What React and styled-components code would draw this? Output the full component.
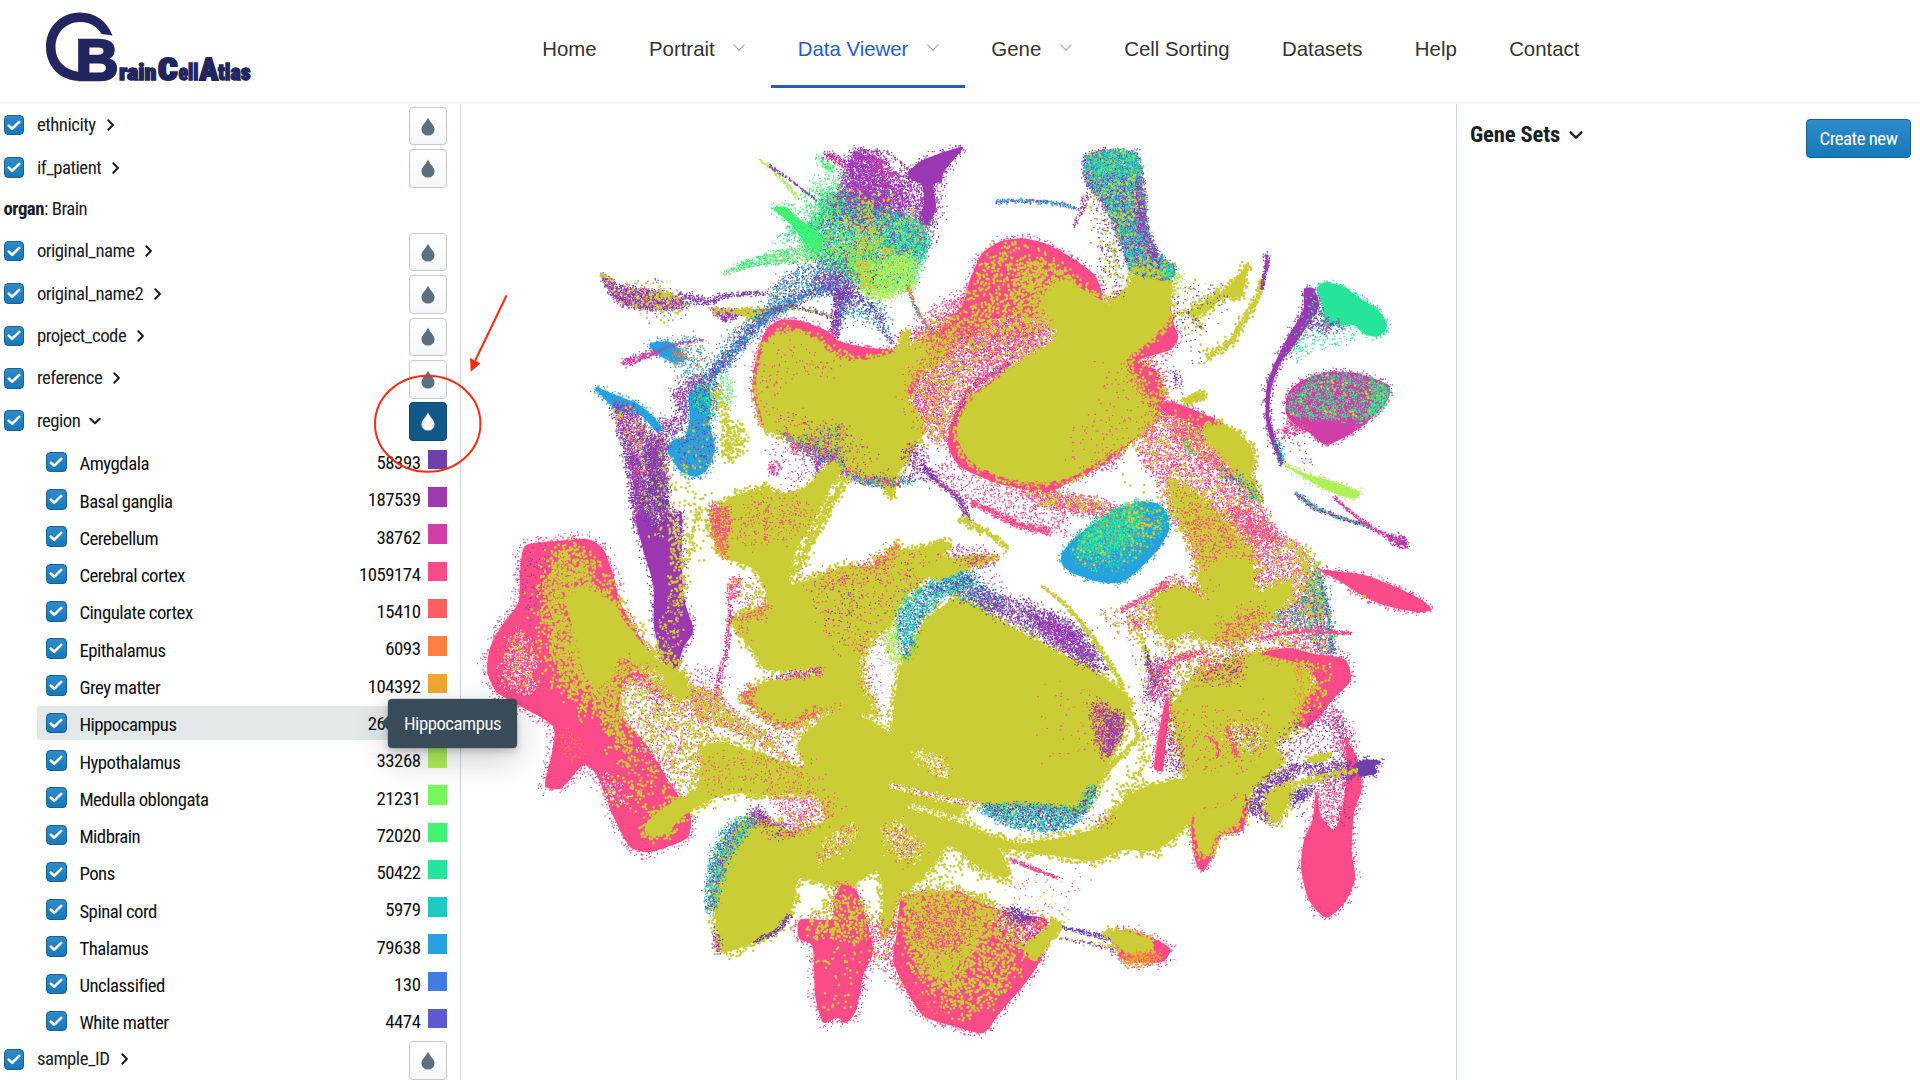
import React from "react";
import styled, { createGlobalStyle } from "styled-components";

const GlobalStyle = createGlobalStyle`
  *, *::before, *::after { box-sizing: border-box; }
  html, body { margin: 0; background: #fff; overflow: hidden; }
`;

const condensed = `"Roboto Condensed", Roboto, "Liberation Sans", sans-serif`;

/* ---------- layout ---------- */

const Page = styled.div`
  position: relative;
  width: 1920px;
  height: 1080px;
  display: flex;
  flex-direction: column;
  overflow: hidden;
  background: #fff;
  color: #182026;
  font-family: ${condensed};
`;

const Header = styled.header`
  flex: none;
  height: 104px;
  display: flex;
  align-items: flex-start;
  border-bottom: 3px solid #f4f9fc;
`;

const LogoBox = styled.a`
  display: block;
  width: 516px;
  height: 100px;
`;

const Nav = styled.nav`
  display: flex;
  height: 88px;
`;

const NavItem = styled.a`
  display: flex;
  align-items: center;
  gap: 18.6px;
  padding: 12px 26.2px 0;
  border-bottom: 3px solid ${(p) => (p.$active ? "#1f5fc6" : "transparent")};
  color: ${(p) => (p.$active ? "#1f5fc6" : "#333")};
  font: 20.4px/24px "Liberation Sans", Arial, sans-serif;
  white-space: nowrap;
`;

const Body = styled.main`
  flex: 1;
  min-height: 0;
  display: flex;
`;

const Sidebar = styled.aside`
  width: 461px;
  flex: none;
  border-right: 1px solid #c9d6dc;
`;

const Canvas = styled.section`
  width: 996px;
  flex: none;
  border-right: 1px solid #c9d6dc;
`;

const GenePanel = styled.aside`
  flex: 1;
  display: flex;
  justify-content: space-between;
  align-items: flex-start;
  padding: 15px 9px 0 13px;
`;

/* ---------- sidebar ---------- */

const CategoryRow = styled.div`
  height: ${(p) => p.$height || 42.4}px;
  display: flex;
  align-items: center;
  padding: 0 13px 0 3.5px;
`;

const Box = styled.span`
  flex: none;
  width: 20.6px;
  height: 20.6px;
  display: flex;
  align-items: center;
  justify-content: center;
  border: 1.2px solid #1c5f94;
  border-radius: 4px;
  background: linear-gradient(#2f8bca, #1779ba);
`;

const Squeeze = styled.span`
  display: inline-block;
  font-size: ${(p) => p.$size || 18.8}px;
  line-height: 24px;
  font-weight: ${(p) => p.$weight || 400};
  letter-spacing: ${(p) => p.$track || -0.5}px;
  white-space: nowrap;
  font-stretch: 75%;
`;

const CategoryName = styled.div`
  flex: 1;
  display: flex;
  align-items: center;
  gap: 9px;
  margin-left: 12.8px;
`;

const DropButton = styled.span`
  flex: none;
  width: 38.5px;
  height: 38.5px;
  margin-top: 2px;
  display: flex;
  align-items: center;
  justify-content: center;
  border: 1.3px solid ${(p) => (p.$active ? "#0b4873" : "#c6cacd")};
  border-radius: 4px;
  color: ${(p) => (p.$active ? "#fff" : "#5c7080")};
  background: ${(p) => (p.$active ? "#125888" : "linear-gradient(#ffffff, #f4f7f9)")};
`;

const ValueList = styled.div`
  display: flex;
  flex-direction: column;
  gap: 2.97px;
  padding: 3.1px 13px 0 37px;
`;

const ValueRow = styled.div`
  height: 34.3px;
  display: flex;
  align-items: center;
  padding-left: 9.2px;
  border-radius: 3px 0 0 3px;
  color: #0c0f12;
  background: ${(p) => (p.$hover ? "#e3e8eb" : "transparent")};
`;

const ValueName = styled(Squeeze)`
  flex: 1;
  margin: 4.5px 0 0 12.6px;
`;

const Count = styled(Squeeze)`
  margin-top: 2px;
`;

const Swatch = styled.i`
  width: 19.2px;
  height: 19.5px;
  margin: -5px 0 0 7.4px;
  background: ${(p) => p.$color};
`;

const Tooltip = styled.div`
  position: absolute;
  left: 388px;
  top: 699px;
  width: 129px;
  height: 49px;
  display: flex;
  align-items: center;
  justify-content: center;
  border-radius: 4px;
  background: #394b59;
  color: #f5f8fa;
  box-shadow: 0 0 0 1px rgba(16, 22, 26, 0.1), 0 3px 6px rgba(16, 22, 26, 0.2), 0 11px 32px rgba(16, 22, 26, 0.22);
  &::before {
    content: "";
    position: absolute;
    left: -7px;
    top: 16px;
    border: solid transparent;
    border-width: 8px 8px 8px 0;
    border-right-color: #394b59;
  }
`;

const Annotation = styled.svg`
  position: absolute;
  left: 360px;
  top: 280px;
`;

/* ---------- gene panel ---------- */

const PanelTitle = styled.div`
  display: flex;
  align-items: center;
  gap: 9px;
  padding-top: 4px;
`;

const CreateButton = styled.button`
  width: 105px;
  height: 38.5px;
  display: flex;
  align-items: center;
  justify-content: center;
  border: 1.3px solid #1a5f93;
  border-radius: 4px;
  color: #fff;
  background: linear-gradient(#2f8bca, #1779ba);
  font-family: inherit;
  padding: 2px 0 0;
`;

/* ---------- icons ---------- */

const Tick = () => (
  <svg width="14" height="11" viewBox="0 0 14 11">
    <path d="M1.8 5.6 5.2 8.8 12.2 1.9" fill="none" stroke="#fff" strokeWidth="2.6" strokeLinecap="round" strokeLinejoin="round" />
  </svg>
);

const Drop = () => (
  <svg width="14" height="19" viewBox="0 0 14 19">
    <path d="M7 .5C6 4 .4 8.400.4 12.200A6.500 6.300 0 0 0 13.600 12.200C13.600 8.400 8 4 7 .5Z" fill="currentColor" />
  </svg>
);

const Chevron = ({ open, size = 12 }) => (
  <svg width={size} height={size} viewBox="0 0 12 12">
    <path d={open ? "M1.300 3.700 6 8.300 10.700 3.700" : "M3.300 1.300 7.900 6 3.300 10.700"} fill="none" stroke="#182026" strokeWidth="2" strokeLinecap="round" strokeLinejoin="round" />
  </svg>
);

const ThinChevron = () => (
  <svg width="12" height="10" viewBox="0 0 12 10">
    <path d="M.6 .6 6 6.200 11.400 .6" fill="none" stroke="#a6a9ad" strokeWidth="1.100" />
  </svg>
);

const Logo = () => (
  <svg width="516" height="100" viewBox="0 0 516 100" fill="#232560" stroke="#232560">
    <path
      d="M112.500 35.500 C107 21 95 12.500 80 12.500 C60 12.500 46 28 46 47 C46 66 60 81 80 81 L80 72 C65 70 55.500 61 55.500 47 C55.500 33 66 22 80 22 C91 22 97.500 27 101.500 34 Z"
      stroke="none"
    />
    <text x="75.500" y="80" fontFamily="Liberation Sans, Arial, sans-serif" fontWeight="700" fontSize="58" strokeWidth="2.600" textLength="43" lengthAdjust="spacingAndGlyphs">B</text>
    <g fontFamily={condensed} fontWeight="900" strokeWidth="1.3">
      <text x="119" y="79.500" fontSize="22" textLength="37.500" lengthAdjust="spacingAndGlyphs">rain</text>
      <text x="158" y="79.500" fontSize="32" strokeWidth="2.200" textLength="19.500" lengthAdjust="spacingAndGlyphs">C</text>
      <text x="178.500" y="79.500" fontSize="22" textLength="20" lengthAdjust="spacingAndGlyphs">ell</text>
      <text x="199.500" y="79.500" fontSize="32" strokeWidth="2" textLength="18.500" lengthAdjust="spacingAndGlyphs">A</text>
      <text x="218" y="79.500" fontSize="22" textLength="32.500" lengthAdjust="spacingAndGlyphs">tlas</text>
    </g>
  </svg>
);

/* ---------- embedding plot ---------- */

const K = {
  D: "#6e40aa", V: "#9c39b2", M: "#d23ea7", P: "#fb4b88", R: "#ff5e63", O: "#ff8040", G: "#efa72f",
  Y: "#cbcd36", L: "#aff05b", N: "#76f85c", g: "#40f373", T: "#26e59a", C: "#1ec8c4", B: "#26a2de",
  U: "#417de0", W: "#ffffff",
};

/* Cell clusters are stored in four tiles: three units to a pixel across,
   and slightly fewer per pixel down in the two lower tiles. */
const TILE = { a: [480, 130], b: [940, 130], c: [480, 520], d: [940, 520] };
const LOW = 2.904;

const toY = (tile, y) => {
  if (tile === "c" || tile === "d") return 520 + y / (y > 0 ? LOW : 3);
  return y > 1170 ? 520 + (y - 1170) / LOW : 130 + y / 3;
};

let seed = 20231;
const rnd = () => {
  seed = (seed * 1664525 + 1013904223) >>> 0;
  return seed / 4294967296;
};
const gauss = () => rnd() + rnd() + rnd() - 1.5;

const parse = (tile, text) => {
  const n = text.trim().split(/\s+/).map(Number);
  const out = [];
  for (let i = 0; i + 1 < n.length; i += 2) out.push([TILE[tile][0] + n[i] / 3, toY(tile, n[i + 1])]);
  return out;
};

const curve = (p, closed) => {
  const out = [];
  const n = p.length;
  const at = (i) => (closed ? p[(i + n) % n] : p[Math.max(0, Math.min(n - 1, i))]);
  for (let i = 0; i < (closed ? n : n - 1); i++) {
    const [a, b, c, d] = [at(i - 1), at(i), at(i + 1), at(i + 2)];
    for (let k = 0; k < 5; k++) {
      const t = k / 5;
      const f = (j) => {
        const m1 = (c[j] - a[j]) * 0.35;
        const m2 = (d[j] - b[j]) * 0.35;
        return (2 * t ** 3 - 3 * t * t + 1) * b[j] + (t ** 3 - 2 * t * t + t) * m1 + (3 * t * t - 2 * t ** 3) * c[j] + (t ** 3 - t * t) * m2;
      };
      out.push([f(0), f(1)]);
    }
  }
  if (!closed) out.push(p[n - 1]);
  return out;
};

const inside = (x, y, p) => {
  let r = false;
  for (let i = 0, j = p.length - 1; i < p.length; j = i++) {
    if (p[i][1] > y !== p[j][1] > y && x < ((p[j][0] - p[i][0]) * (y - p[i][1])) / (p[j][1] - p[i][1]) + p[i][0]) r = !r;
  }
  return r;
};

const layers = [];
const dot = (x, y) => `M${x.toFixed(1)} ${y.toFixed(1)}h0`;
const sizeOf = (c) => (c === "Y" ? 2.6 : 1.5);

/* solid cluster with a ragged rim */
const F = (tile, c, text, fuzz = 1.6) => {
  const p = curve(parse(tile, text), true);
  layers.push({ color: K[c], fill: "M" + p.map((q) => q[0].toFixed(1) + " " + q[1].toFixed(1)).join("L") + "Z" });
  let d = "";
  for (let i = 0; i < p.length; i++) {
    const q = p[(i + 1) % p.length];
    const len = Math.hypot(q[0] - p[i][0], q[1] - p[i][1]);
    for (let k = 0; k < len * (0.6 + fuzz * 0.25); k++) {
      const t = rnd();
      d += dot(p[i][0] + (q[0] - p[i][0]) * t + gauss() * fuzz * 2, p[i][1] + (q[1] - p[i][1]) * t + gauss() * fuzz * 2);
    }
  }
  layers.push({ color: K[c], dots: d, size: sizeOf(c) });
};

/* scattered cells inside an outline; mix = "V.5 T.2" */
const S = (tile, mix, text, jitter = 3) => {
  const p = curve(parse(tile, text), true);
  const xs = p.map((q) => q[0]);
  const ys = p.map((q) => q[1]);
  const [x0, x1, y0, y1] = [Math.min(...xs), Math.max(...xs), Math.min(...ys), Math.max(...ys)];
  mix.split(" ").forEach((m) => {
    const c = m[0];
    const s = sizeOf(c);
    const tries = ((x1 - x0) * (y1 - y0) * Number(m.slice(1)) * 1.3) / (s * s * 0.8);
    let d = "";
    for (let i = 0; i < tries; i++) {
      const x = x0 + rnd() * (x1 - x0);
      const y = y0 + rnd() * (y1 - y0);
      if (inside(x, y, p)) d += dot(x + gauss() * jitter, y + gauss() * jitter);
    }
    layers.push({ color: K[c], dots: d, size: s });
  });
};

/* thin trail of cells, w0 to w1 px wide */
const L = (tile, mix, text, w0, w1) => {
  const p = curve(parse(tile, text), false);
  mix.split(" ").forEach((m) => {
    const c = m[0];
    const s = sizeOf(c);
    let d = "";
    for (let i = 0; i < p.length - 1; i++) {
      const len = Math.hypot(p[i + 1][0] - p[i][0], p[i + 1][1] - p[i][1]);
      const w = w0 + ((w1 - w0) * i) / p.length;
      const n = (len * w * Number(m.slice(1))) / (s * s * 0.5);
      for (let k = 0; k < n || (k === 0 && rnd() < n); k++) {
        const t = rnd();
        d += dot(p[i][0] + (p[i + 1][0] - p[i][0]) * t + gauss() * w * 0.6, p[i][1] + (p[i + 1][1] - p[i][1]) * t + gauss() * w * 0.6);
      }
    }
    layers.push({ color: K[c], dots: d, size: s });
  });
};

/* upper left fan */
S("a", "V.9", "1110 90 1130 60 1190 80 1220 150 1230 240 1150 250 1090 200 1095 140", 4);
S("a", "V.7 M.08", "1095 90 1130 60 1200 75 1250 130 1280 200 1260 270 1180 270 1080 240 1080 160", 6);
S("a", "V.4", "1240 140 1300 120 1340 200 1340 300 1270 260", 7);
F("a", "V", "1285 128 1320 95 1380 70 1450 50 1420 90 1390 128 1385 155 1360 165 1368 230 1345 285 1315 275 1332 220 1325 165 1295 150", 2.5);
S("a", "V.2", "1260 140 1350 140 1390 200 1370 320 1320 330", 7);
S("a", "M.7", "1165 85 1210 95 1235 140 1190 120", 3);
S("a", "g.9 T.35 C.15 V.14", "1030 190 1100 200 1250 260 1320 280 1345 340 1310 420 1290 470 1200 480 1120 440 1060 410 1000 370 960 300 1010 260", 6);
S("a", "g.35", "960 200 1080 120 1080 240 1000 290", 8);
S("a", "V.4 B.08", "1070 190 1250 190 1270 270 1160 300 1060 270", 9);
S("a", "T.4 V.12 B.12", "1190 250 1330 270 1340 350 1310 390 1200 340", 7);
F("a", "g", "880 235 920 232 950 262 1020 315 1020 360 980 345 940 290", 3);
S("a", "g.5 T.25 L.15", "720 435 780 398 870 368 990 345 1020 380 950 400 850 405 760 425", 2.5);
S("a", "T.25 g.2", "885 330 960 280 1010 330 900 335", 4);
S("a", "L1.3", "1110 410 1180 395 1300 372 1300 470 1200 508 1150 490", 5);
S("a", "L.35 g.2 D.06 V.05", "1010 370 1160 330 1200 440 1140 480 1040 420", 8);
S("a", "Y.45", "1130 225 1160 225 1215 340 1235 380 1160 360 1185 480 1150 480 1120 400 1140 320", 5);
S("a", "Y.1", "1060 180 1250 200 1330 320 1200 470 1060 400", 5);
L("a", "L.8", "840 90 880 120 920 165 950 200", 3, 5);
L("a", "V.7", "865 105 930 150 1010 212", 3, 2);
L("a", "g.7", "1015 85 1040 105 1055 120", 6, 9);
L("a", "P.5 V.4", "1035 75 1060 80 1085 105", 8, 8);
L("a", "V.3", "1150 65 1230 70 1290 125", 4, 5);

/* left arms */
S("a", "V.8 D.45 P.18 Y.14", "362 435 385 440 410 465 480 475 560 490 605 505 620 530 520 540 430 525 390 490", 3);
S("a", "Y.6", "362 432 380 432 395 462 378 460", 2);
L("a", "Y.6", "510 500 560 490 600 505", 7, 6);
S("a", "L.06 V.05 Y.04", "430 455 580 465 620 570 480 560", 6);
L("a", "D.45 V.2", "600 498 680 515 740 497 860 490", 9, 3);
S("a", "V1", "690 535 760 545 790 550 740 575 705 555", 2);
L("a", "V.8 Y.6", "700 543 760 545 850 545 930 530", 6, 5);
F("a", "Y", "790 545 845 545 835 568 805 562", 2);
L("a", "Y.3 D.3", "930 530 1000 540 1050 560", 5, 5);
F("a", "B", "510 640 565 634 600 660 615 690 580 698 545 680 515 658", 2.5);
S("a", "B.2 O.12", "560 640 660 630 680 760 620 750 580 690", 9);
S("a", "O.4", "580 665 625 665 610 690", 3);
L("a", "M1", "430 700 480 683 530 665", 8, 5);
L("a", "M.6 U.3", "530 665 580 645 670 628", 4, 2);
S("a", "D.26 B.17 C.12 O.04", "900 450 1040 385 1140 440 1080 480 980 500 890 560 820 620 740 710 690 760 630 760 700 690 760 610 840 540", 7);
L("a", "D.4 B.22", "1060 470 960 500 860 560 780 640 690 745", 9, 11);
S("a", "D.6 V.25 B.1", "1000 450 1080 435 1130 500 1100 540 1060 490", 7);
S("a", "V.6 D.6", "1065 480 1095 490 1075 615 1048 620 1058 540", 3);
S("a", "B.18 C.1 D.1", "1080 520 1200 520 1230 620 1150 560 1080 600", 8);
L("a", "D.25", "1110 480 1180 540 1240 650", 12, 5);
L("a", "O.8 B.2", "1282 465 1310 540 1358 618", 4, 3);

/* left blue bulb and violet leg */
S("a", "D.4 V.2 P.08", "580 780 610 755 690 745 670 800 620 880 560 920 530 880 590 850", 6);
F("a", "B", "628 790 690 780 688 880 705 955 680 1020 645 1040 600 1022 562 960 580 930 615 920 630 860", 2.5);
S("a", "C.3 g.2 D.2", "640 770 715 760 695 880 640 820", 5);
F("a", "B", "345 770 400 792 470 820 520 860 545 895 530 905 480 855 410 838 370 803", 2);
S("a", "O.05 Y.04 D.08", "600 880 700 880 690 1020 600 1000", 3);
S("a", "g.25 L.1", "725 730 750 740 760 830 720 800", 4);
S("a", "V.6 D.35 L.08 Y.09 P.12", "400 830 460 835 500 900 560 930 560 1030 570 1130 600 1180 480 1180 455 1010 420 920", 5);
S("a", "V.8 D.3 P.12", "435 970 470 980 490 1100 520 1190 468 1190 450 1060", 5);
S("a", "D.7 V.3", "500 930 545 930 545 1030 565 1150 530 1140 500 1000", 5);
F("a", "V", "468 1160 490 1150 530 1190 570 1150 605 1150 605 1290 612 1400 640 1490 610 1540 588 1605 550 1580 522 1480 520 1360 490 1260 472 1190", 2.5);
S("a", "W.4", "568 1110 595 1110 600 1215 578 1215", 4);
S("a", "Y.1 D.3", "480 1090 560 1000 560 1220 510 1200", 5);
S("a", "Y.42", "575 1150 620 1300 600 1500 580 1600 530 1560 540 1480 570 1380", 5);
S("a", "V.3", "520 1320 570 1350 610 1480 590 1560 540 1530", 3);
S("c", "V.7 D.4", "525 460 545 475 552 530 545 565 530 560 532 500", 4);
S("a", "Y1", "700 765 725 800 755 860 790 895 798 920 775 980 740 990 722 960 728 880 705 810", 5);
S("a", "Y.09", "560 960 640 1020 690 1150 640 1300 600 1150 550 1080", 12);
L("a", "Y.5", "665 1130 640 1200 625 1290", 6, 6);

/* upper centre lobes */
S("b", "P.5 D.03", "-120 640 80 480 200 580 340 600 200 720 80 790 40 850 20 950 -60 880 -120 800", 10);
F("a", "P", "818 750 835 660 858 600 900 570 960 572 1040 602 1080 635 1180 655 1280 655 1360 620 1440 560 1340 690 1290 800 1200 900 900 900 850 890 828 830", 2);
F("a", "Y", "842 700 850 645 900 615 960 608 1020 640 1070 688 1160 690 1260 662 1370 625 1440 585 1410 640 1380 690 1310 730 1275 800 1330 880 1305 950 1255 1030 1235 1102 1215 1068 1160 1050 1080 1010 1000 960 930 925 860 900 838 830 828 750", 2.5);
S("a", "Y.3", "850 650 900 590 960 600 1060 650 1150 680 1060 700 900 680", 4);
F("a", "Y", "1255 660 1275 608 1288 610 1275 665");
S("a", "P.05", "830 700 900 640 1100 720 900 760 860 880", 10);
S("a", "P.06 V.03", "850 860 1080 880 1220 1040 1060 1000 950 930", 9);
S("a", "Y.28", "1280 740 1440 600 1500 560 1500 640 1400 900 1330 930", 10);
S("a", "P.2", "1280 740 1400 650 1400 800 1330 900", 10);
S("a", "D.5 C.25 P.2", "900 905 980 940 1070 970 1100 1020 1200 1045 1300 1045 1290 1060 1200 1068 1110 1050 1010 1000", 4);
S("a", "D.12 C.1 P.1", "960 920 1080 880 1100 960 1050 980", 9);
S("a", "V.55", "1280 960 1330 950 1340 1000 1390 1050 1350 1050 1280 1010", 8);
L("a", "V.5 D.4", "1330 1010 1380 1060 1440 1110 1465 1170", 5, 6);
S("a", "P.8 V.3", "870 1010 890 995 890 1030 875 1040", 4);
S("a", "P.06 D.03", "870 940 1010 970 1020 1080 940 1100", 8);
L("a", "V.7", "1020 990 1010 1060 1020 1090", 6, 5);
S("a", "P.7", "930 940 960 950 950 975 940 970", 3);
F("b", "P", "20 590 70 520 90 450 125 372 180 335 240 325 300 335 360 362 420 400 468 440 488 512 440 560 330 560 230 560 150 570 70 610", 2.5);
S("b", "P.7 Y.15", "-30 640 40 570 160 560 340 560 260 620 120 610 40 660", 7);
S("b", "P.35 Y.12 D.02", "60 600 200 560 340 560 330 660 230 690 120 700", 9);
S("b", "Y.3", "60 560 110 420 180 350 280 350 400 440 450 520 330 600 100 600", 5);
S("b", "Y.6", "210 460 290 390 370 430 440 500 440 580 250 560", 9);
S("b", "Y.5 P.2", "-60 640 -20 580 60 560 60 620 -20 700", 8);
F("b", "P", "50 850 100 790 210 715 340 640 400 600 500 520 560 480 640 470 690 530 702 585 715 622 690 660 600 690 650 725 672 800 660 840 620 892 560 950 480 1010 400 1050 330 1085 260 1080 160 1055 60 1010 25 950 30 890", 2.8);
F("b", "Y", "68 850 110 795 230 705 345 630 340 570 300 520 370 450 430 480 500 515 560 480 590 425 640 408 695 450 690 530 685 570 620 640 560 690 590 760 645 825 650 860 575 930 480 990 400 1038 300 1058 200 1045 100 1000 65 955 50 900", 3.2);
S("b", "P.04", "480 700 660 800 640 870 400 1040 420 900 500 850", 14);
S("b", "P.35 Y.25", "560 690 650 700 690 820 650 870 600 800", 6);
L("b", "D.3 P.4", "210 700 140 740 80 790 40 880", 6, 6);
S("b", "P.4", "440 1030 540 960 540 1000 480 1020", 5);

/* stalk */
S("b", "V1.3 D.3 B.35 T.4 Y.12", "440 75 500 60 580 67 600 110 615 200 622 290 655 370 700 410 690 445 580 430 550 360 520 280 490 220 440 160 432 120", 3);
S("b", "T.3 g.15 B.15", "450 75 580 67 600 140 500 130 470 150", 4);
S("b", "V.6", "595 130 612 200 620 290 655 370 630 380 590 280", 3);
S("b", "Y.6", "560 440 590 400 640 405 690 440 640 470", 8);
S("b", "D.06 Y.07 V.07 L.05", "430 170 490 210 550 360 560 470 500 510 480 380 470 270", 9);
S("b", "T.6 B.2", "670 405 705 415 700 450 670 440", 4);
S("b", "L.9", "690 440 735 427 718 455", 3);
L("b", "B.7 V.15", "165 215 250 213 350 220 412 238", 4, 3.5);
L("b", "V.4", "440 195 425 240 400 288", 7, 3);
L("b", "B.2", "590 52 590 70", 4, 3);

/* right hand slivers */
F("b", "Y", "922 405 915 450 902 500 860 498 810 535 770 560 755 540 800 512 855 480 885 450", 2.4);
L("b", "Y.35 D.1", "700 560 750 550 790 600", 6, 7);
S("b", "L.04 D.06 Y.05", "700 470 850 470 850 540 780 600 760 700 830 650 760 640", 9);
L("b", "Y1.2", "968 440 950 500 912 575 865 640", 4, 10);
L("b", "Y.7", "865 640 830 662 800 682", 10, 8);
L("b", "V1.4", "980 375 980 405 965 480", 6, 2.5);
F("b", "V", "1092 480 1120 475 1138 525 1112 570 1068 640 1018 705 993 780 988 860 1004 920 1028 995 1020 1000 992 930 977 860 980 770 1004 700 1044 620 1090 540", 2);
S("b", "V.4 D.1 T.15", "1110 490 1160 500 1170 590 1100 600", 7);
F("b", "T", "1130 478 1155 457 1212 470 1260 505 1310 535 1335 570 1338 600 1310 620 1270 610 1240 585 1160 585 1152 530", 1.6);
S("b", "V.3", "1150 560 1200 570 1210 600 1130 600", 4);
S("b", "T.15", "1120 600 1290 605 1190 645 1090 680 1020 700 1060 640", 7);
F("b", "M", "1040 800 1060 770 1110 740 1180 725 1260 732 1345 765 1345 805 1310 850 1250 900 1162 945 1110 910 1060 880 1038 850", 2);
S("b", "T.3 g.12 Y.04", "1045 800 1110 742 1180 728 1260 735 1345 768 1310 850 1200 870 1060 860", 3);
S("b", "T.5 g.2", "1290 760 1350 770 1340 820 1280 870 1250 890 1300 810", 3);
S("b", "P.5 M.3", "1015 918 1060 870 1110 900 1040 920", 5);
S("b", "M.08", "1040 910 1080 910 1110 1010 1060 970", 8);
L("b", "T.5 D.3", "1010 940 1020 965 1025 1000", 7, 5);
F("b", "L", "1032 1005 1100 1032 1170 1052 1258 1085 1245 1105 1200 1095 1140 1070", 2);
L("b", "M.5 T.5 D.3", "1068 1090 1120 1130 1190 1160 1290 1190", 5, 3);
L("b", "M.9", "1180 1100 1250 1160 1330 1212 1395 1240", 3, 6);
S("b", "M.9 D.3", "1345 1215 1385 1215 1400 1250 1360 1245", 3);
S("b", "D.5 V.3", "685 730 720 750 725 765 700 750", 5);
F("b", "Y", "732 812 765 792 792 790 785 805 745 820");
S("b", "V.05 P.06", "640 690 700 700 730 780 670 780", 6);

/* right branch */
S("b", "P.45 Y.12", "660 840 700 820 800 855 900 915 940 970 935 1030 960 1100 1010 1200 1080 1250 1120 1290 1145 1350 1170 1470 1180 1560 1050 1540 960 1500 960 1400 880 1380 800 1400 770 1350 750 1250 700 1170 640 1050 590 950", 5);
F("b", "P", "660 825 700 818 790 852 850 885 800 895 740 870 680 850");
S("b", "Y.3 P.4", "680 850 850 890 930 1000 900 1060 800 1000 700 920", 6);
F("b", "Y", "800 890 860 890 905 920 940 970 935 1040 958 1110 920 1070 870 1000 810 940", 2.8);
F("b", "Y", "690 1060 760 1090 850 1170 930 1260 940 1320 930 1390 850 1430 790 1370 765 1240 710 1150", 4.5);
S("b", "P.22", "700 1080 830 1140 1000 1200 960 1300 880 1260 780 1300", 9);
S("b", "P.6", "860 1130 930 1140 1050 1230 1100 1260 1000 1230 930 1220", 5);
S("b", "Y.7", "1030 1230 1100 1260 1140 1310 1150 1450 1110 1440 1080 1290", 5);
S("b", "D.2 B.12 T.1", "830 1010 930 1050 970 1120 920 1100", 6);
L("b", "g.6", "735 935 745 960 765 975", 5, 5);
S("d", "D.18 B.12 C.12 Y.1", "1140 130 1170 300 1185 400 1150 390 1100 330 980 280 1080 230", 8);
L("d", "T.35 D.25", "1140 160 1165 280 1178 390", 4, 5);
S("b", "Y.03", "500 1050 620 1000 650 1100", 5);
S("b", "P.2 D.01", "0 1000 100 1040 260 1090 500 1130 520 1160 380 1160 380 1215 260 1190 120 1130 10 1080", 6);
L("b", "P1.1", "90 1115 180 1158 260 1192 330 1200", 6, 8);
S("b", "P.8 Y.25", "220 1055 340 1085 450 1105 540 1130 540 1155 440 1155 350 1135 270 1110", 5);

/* teal and blue oval */
F("d", "B", "365 100 400 55 470 5 530 -30 600 -55 655 -48 685 -10 685 35 650 90 590 150 540 182 480 180 400 155 367 130", 2);
S("d", "T.5 g.25", "420 60 460 10 530 -30 600 -45 580 50 500 90 430 100", 7);
S("d", "C.2 Y.08 O.05 g.12", "400 80 530 -30 660 -40 670 20 560 130 450 150", 6);
S("d", "Y.3", "540 -30 600 -50 600 0 660 30 640 50 560 10", 4);

/* far right leaf */
F("d", "P", "1140 145 1200 150 1280 162 1380 200 1450 235 1474 262 1430 267 1330 247 1260 215 1200 178", 2);
S("d", "P.4 Y.04", "1230 210 1300 235 1350 250 1280 235", 5);

/* centre left star */
F("c", "Y", "755 300 800 265 860 245 850 190 820 140 740 110 705 60 690 -20 770 -75 850 -90 930 -70 1000 -110 1050 -160 1070 -140 1030 -60 990 20 940 100 930 185 1000 170 1100 132 1170 137 1250 72 1270 90 1405 66 1390 100 1410 130 1350 160 1270 230 1240 290 1170 370 1150 460 1200 560 1120 560 1030 555 960 590 915 600 840 560 785 512 860 470 1020 450 1000 432 860 435 820 380", 2.8);
F("a", "Y", "845 1070 900 1095 980 1080 1050 1005 1080 1020 1010 1110 960 1170 860 1150");
L("a", "Y1.1", "1100 1040 1050 1120 1010 1200 940 1330", 9, 11);
S("c", "P.8", "685 -40 740 -40 755 10 735 100 705 60", 4);
S("c", "O.6", "700 50 720 60 745 110 725 105", 3);
S("c", "P.14", "830 -70 970 -60 980 30 870 60 770 50", 11);
S("c", "P.25", "760 290 800 265 860 240 870 270 790 320 830 380", 6);
S("c", "P.15", "930 170 1060 150 1250 80 1200 160 1040 200", 10);
S("c", "P.5", "1130 135 1180 130 1245 72 1250 90 1180 140", 3);
S("c", "P.06 D.02", "1000 200 1400 80 1250 260 1160 390 1080 380", 9);
S("c", "P.8 O.12", "750 170 785 170 785 190 765 240 745 220", 4);
S("c", "P.14 Y.15", "780 170 850 190 830 240 780 250", 6);
L("c", "P.4 V.15", "750 240 742 370 720 450 710 520", 5, 6);
S("c", "P.65", "778 500 830 485 815 520 840 550 900 590 940 590 1020 540 1000 570 920 605 840 570", 5);
S("c", "V.4 P.3", "860 460 1010 430 1020 450 900 460", 4);
S("c", "W.35 P.12", "1150 380 1230 330 1250 460 1290 510 1250 620 1200 590 1150 470", 6);
S("c", "W1.2", "1190 390 1230 390 1245 450 1280 500 1250 600 1210 560 1200 460", 6);
S("c", "P.15 Y.1", "850 620 900 590 1090 530 1050 570 960 660", 7);

/* left mass */
F("c", "P", "115 240 120 150 135 75 220 62 320 55 370 85 400 160 425 250 500 370 560 435 610 458 620 500 560 520 440 470 420 560 490 640 530 700 580 780 630 850 625 920 560 950 500 965 450 950 420 900 390 840 350 740 310 712 260 765 235 782 195 770 215 680 220 600 130 545 50 500 22 440 30 370 70 300", 3.5);
S("c", "Y.25", "200 100 300 70 380 160 430 280 420 480 480 640 560 780 440 740 340 560 220 470 160 260", 9);
S("c", "Y.7", "200 130 290 80 340 160 300 480 220 400 190 260", 8);
F("c", "Y", "260 250 300 200 350 215 400 240 430 290 520 395 610 455 620 510 560 500 480 430 420 400 390 460 350 480 310 440 290 340", 5);
S("c", "Y.7", "350 460 430 420 430 560 450 650 400 640 360 560", 7);
S("c", "Y.4", "220 420 330 440 360 560 300 560", 9);
S("c", "V.06", "130 80 220 80 200 200 130 300", 8);
S("c", "W.35 O.12 Y.08", "100 320 150 360 165 440 150 500 80 480 70 430", 7);
S("c", "O.15", "230 620 300 630 300 690 240 680", 7);
S("c", "W.5 Y.1", "450 480 520 440 600 520 660 560 680 640 640 740 560 710 500 650", 8);
S("c", "P.16 Y.2", "440 400 540 440 660 540 690 640 660 780 560 740 500 640 430 500", 8);
S("c", "P.6 Y.15", "380 760 420 740 520 760 600 800 560 860 420 830", 8);
S("c", "W.2", "350 730 400 760 440 810 380 820", 8);
S("c", "P.2", "620 440 720 450 730 520 660 530", 9);
S("c", "P.6 Y.6", "630 500 710 500 760 560 860 620 920 690 840 650 740 600 660 570", 6);
S("c", "Y.2 P.08", "560 520 660 540 760 600 800 640 700 650 640 600", 9);
F("c", "Y", "560 430 610 455 625 500 600 520 560 490");

/* centre oval */
F("c", "Y", "1250 480 1270 410 1330 300 1390 250 1440 225 1530 275 1630 330 1740 390 1830 430 1900 478 1945 520 1930 620 1882 715 1850 780 1800 850 1700 835 1500 830 1380 805 1200 760 1230 640", 2.8);
S("c", "T.5 B.3 D.15", "1245 310 1275 230 1340 185 1440 145 1490 160 1460 190 1380 230 1320 300 1290 400 1260 380", 5);
S("c", "L.9", "1212 350 1240 305 1260 390 1248 420 1222 390", 4);
S("d", "T.4 D.4 B.15", "0 180 60 160 140 195 190 250 130 250 40 215", 7);
S("d", "V.5 D.25 T.05", "110 210 260 240 380 290 450 350 500 440 460 430 370 380 250 310 130 255", 7);
S("d", "V.9", "260 270 370 295 440 360 470 420 420 400 340 350", 7);
S("d", "V.6 P.15", "455 535 500 540 550 570 535 640 495 700 470 640", 5);
S("d", "V.7", "500 560 550 580 535 640 500 680", 4);
S("d", "B.5 T.45 D.3", "120 830 280 825 410 835 440 780 470 770 450 830 400 885 310 905 220 890 150 860", 4);
S("d", "P.01 O.01", "300 500 460 500 460 640 320 720", 9);
F("d", "Y", "-70 150 20 115 100 105 170 108 120 130 40 150 0 170");
S("d", "P.2 V.15", "20 100 70 80 180 105 120 140", 6);
L("d", "Y1.1", "60 0 130 30 205 82", 8, 4);
S("d", "P.15", "130 150 180 170 200 230", 6);
F("d", "Y", "-20 70 30 66 10 85 -30 95");

/* lower star */
F("c", "Y", "960 640 1040 570 1100 550 1180 590 1250 630 1330 640 1460 650 1500 800 1440 850 1470 890 1560 960 1585 1038 1500 1010 1400 935 1370 990 1300 1060 1250 1100 1225 1200 1205 1190 1210 1100 1190 1020 1090 1070 960 1040 940 1120 900 1180 840 1220 730 1255 712 1190 700 1100 720 980 780 880 850 870 930 905 1040 870 1000 795 880 800 740 795 620 850 560 910 500 915 500 880 560 830 650 780 670 660 740 650 860 685 970 720", 3.2);
S("c", "P.1", "860 680 980 700 1060 850 940 900 900 800 850 740", 12);
S("c", "P.06", "660 670 850 690 880 790 680 790", 11);
S("c", "W.35 P.2", "1050 930 1100 890 1140 900 1090 950 1010 1000", 7);
S("c", "W.4 P.25", "1220 900 1260 880 1330 940 1290 1000 1240 960", 8);
S("c", "W.4 P.08", "1300 675 1390 690 1400 750 1340 720", 5);
L("c", "W.5 P.12", "1230 770 1350 800 1500 830", 5, 7);
L("c", "W.4 Y.1", "1280 830 1400 860 1500 890", 6, 7);
S("c", "T.5 B.3 V.2", "680 1140 678 1060 700 960 740 890 790 862 830 875 760 960 725 1060 700 1130", 5);
S("c", "V.9", "800 855 840 835 875 880 840 875", 4);
S("c", "D.6 P.2", "700 1180 725 1250 705 1250", 4);
L("c", "D.7", "820 1225 890 1195 930 1145", 4, 6);
S("c", "P.3 D.2", "830 870 950 890 940 920 860 910", 6);
S("c", "P.3 Y.1", "880 800 1040 820 1050 860 960 900 900 850", 9);

/* lower roots */
F("c", "P", "1055 1160 1060 1110 1085 1060 1130 1080 1165 1180 1178 1260 1150 1320 1130 1420 1100 1460 1070 1445 1030 1460 1005 1380 998 1240 957 1215 960 1160", 3);
S("c", "Y.5", "1000 1140 1100 1080 1160 1130 1170 1220 1000 1200", 9);
S("c", "Y.06", "1010 1220 1160 1220 1110 1440 1030 1430", 6);
S("c", "P.3 Y.04", "1150 1180 1260 1180 1300 1380 1180 1280 1130 1400", 8);
F("c", "P", "1265 1100 1340 1080 1440 1080 1500 1110 1600 1145 1700 1160 1690 1260 1640 1340 1560 1430 1510 1490 1440 1475 1330 1440 1270 1350 1240 1280 1250 1200", 3);
S("c", "Y1", "1300 1085 1390 1065 1480 1085 1540 1110 1520 1200 1450 1300 1420 1360 1350 1330 1290 1220", 8);
S("c", "Y.5", "1270 1100 1480 1110 1600 1160 1640 1260 1560 1380 1440 1440 1300 1300", 9);
S("c", "P.3", "1320 1120 1480 1120 1440 1250 1300 1220", 9);
S("c", "O.3", "1215 1260 1300 1370 1400 1440 1330 1420 1240 1300", 8);
S("d", "W.3 D.1", "180 1150 320 1170 280 1240 200 1210", 9);
S("d", "D.9", "190 1130 230 1128 290 1158 230 1165", 4);
S("d", "Y.2", "280 1130 340 1130 360 1170 300 1170", 8);
F("d", "Y", "255 1240 320 1190 340 1165 365 1180 300 1260 280 1272");
L("d", "D.8", "365 1182 440 1198 530 1222", 3, 6);
L("d", "G.2 D.15", "360 1215 450 1230 530 1250", 3, 8);
F("d", "P", "520 1200 570 1192 640 1215 690 1245 670 1282 600 1285 540 1270", 3);
F("d", "Y", "495 1195 580 1200 640 1235 600 1262 550 1250", 2.5);
S("d", "O.5 G.4", "530 1270 600 1255 670 1262 640 1285 570 1298", 3);
L("d", "P1.2", "215 988 280 1012 355 1040", 4, 3);
S("d", "Y.2", "-100 930 60 960 200 1040 60 1040 -80 1060", 8);
S("d", "P.02 L.02", "220 1050 420 1010 380 1150 200 1120", 9);

/* right complex */
S("d", "Y.2 P.12", "540 260 700 200 900 220 960 400 820 460 700 420 640 330", 9);
F("d", "Y", "645 230 700 192 760 205 800 235 860 190 960 210 1040 180 1055 215 970 300 900 350 800 350 750 320 700 345 655 320", 4);
F("d", "Y", "690 545 720 510 760 450 830 430 900 395 980 385 1080 410 1110 470 1085 590 1000 650 1030 700 960 760 920 790 850 880 760 870 738 740 712 640", 3.5);
S("d", "P.4", "660 200 690 165 750 170 780 215 720 190", 4);
L("d", "P.8", "545 262 620 222 680 185", 5, 8);
S("d", "P.8", "570 290 600 290 600 320 580 320", 4);
S("d", "P.08 Y.08", "480 270 640 240 640 340 560 350", 8);
S("d", "P.3", "860 280 940 260 1000 280 900 380 820 350", 9);
S("d", "P.3 D.15", "780 420 900 390 900 460 800 470", 8);
L("d", "P.7", "660 440 710 405 790 380", 8, 7);
S("d", "P.1 Y.1", "660 430 800 380 840 430 740 500 690 520", 8);
F("d", "P", "970 388 1040 372 1130 390 1215 405 1232 465 1180 520 1120 590 1078 600 1085 540 1130 470 1090 420", 3.5);
S("d", "Y.4 O.1", "1060 420 1160 430 1140 520 1080 580", 8);
L("d", "P1", "950 345 1040 328 1130 322 1233 330", 3, 4);
L("d", "Y.6", "590 320 620 390 640 470", 7, 4);
L("d", "D.6", "615 370 630 430 650 480", 4, 5);
S("d", "D.35 P.35", "640 400 680 420 690 520 620 520 620 470", 6);
S("d", "L.08 P.06 D.05", "600 380 640 480 640 620 600 620", 7);
L("d", "Y1.3", "305 190 380 250 450 330 520 435 560 520", 3, 5);
L("d", "Y1.2", "560 520 575 570 592 632 540 690 460 765", 4, 7);
L("d", "Y.22", "600 620 610 690 570 760 530 810", 12, 20);
F("d", "P", "675 530 688 545 678 640 668 725 642 718 656 620", 2);
S("d", "D.2 P.15", "685 550 710 600 735 740 680 720", 6);
S("d", "W.35 D.08 P.1", "860 600 950 600 970 650 900 670", 7);
L("d", "P.6", "858 600 880 650 890 690", 4, 7);
L("d", "P.5", "800 625 830 650 835 690", 4, 3);
S("d", "P.04", "700 560 1000 560 950 740 750 740", 12);
F("d", "Y", "-100 870 0 880 100 905 250 940 400 915 480 890 530 840 600 780 740 752 900 740 1000 690 940 770 900 850 760 872 700 925 640 960 550 958 460 990 350 975 200 955 100 950 -40 940", 3.5);
F("d", "P", "757 870 850 830 920 800 908 900 845 915 820 970 790 1020 765 985", 2);
F("d", "Y", "765 860 850 830 912 800 895 880 835 905 805 975 775 950", 4);
S("d", "Y.2", "480 880 540 790 620 750 560 860", 8);
S("d", "D.08 P.1", "420 860 520 850 500 890", 6);

/* lower right drop */
S("d", "D.12 P.06", "990 650 1180 530 1200 620 1180 700 1050 700", 8);
S("d", "P.5 D.15", "1160 560 1200 560 1240 650 1220 720 1180 620", 6);
F("d", "P", "1143 860 1180 900 1205 850 1222 720 1215 640 1250 690 1265 780 1242 850 1235 960 1245 1040 1215 1110 1158 1155 1105 1100 1083 1010 1092 930 1118 870 1128 790", 2.5);
S("d", "P.4 D.06", "1130 770 1220 740 1220 880 1170 890", 7);
S("d", "D.9 P.08", "920 840 950 780 1000 735 1080 715 1060 750 1000 790 1010 830 1000 880", 5);
S("d", "D.7 P.1", "1040 715 1250 700 1250 745 1150 755 1100 735", 5);
F("d", "D", "1250 708 1280 695 1325 702 1305 715 1310 735 1260 745", 2);
S("d", "D1", "1050 795 1110 770 1115 795 1070 830 1050 820", 4);
L("d", "Y1", "1250 728 1150 745 1060 770 1010 800", 4, 12);
F("d", "Y", "985 800 1045 775 1042 820 1010 880 985 850", 3);
F("d", "Y", "1100 695 1165 678 1168 690 1130 700");
S("d", "D.04", "1040 860 1120 840 1100 900", 6);

const ScatterSvg = styled.svg`
  display: block;
  width: 995px;
  height: 976px;
`;

const Scatter = () => (
  <ScatterSvg viewBox="461 104 995 976" strokeLinecap="round" fill="none">
    {layers.map((l, i) =>
      l.fill ? <path key={i} d={l.fill} fill={l.color} /> : <path key={i} d={l.dots} stroke={l.color} strokeWidth={l.size} />
    )}
  </ScatterSvg>
);

/* ---------- data ---------- */

const navItems = [
  ["Home"], ["Portrait", true], ["Data Viewer", true], ["Gene", true], ["Cell Sorting"], ["Datasets"], ["Help"], ["Contact"],
];

const regions = [
  ["Amygdala", "58393", "#6e40aa"], ["Basal ganglia", "187539", "#9e3bb3"], ["Cerebellum", "38762", "#d23ea7"],
  ["Cerebral cortex", "1059174", "#fb4b88"], ["Cingulate cortex", "15410", "#ff5e63"], ["Epithalamus", "6093", "#ff8040"],
  ["Grey matter", "104392", "#efa72f"], ["Hippocampus", "261520", "#cdcf37"], ["Hypothalamus", "33268", "#aff05b"],
  ["Medulla oblongata", "21231", "#76f85c"], ["Midbrain", "72020", "#40f373"], ["Pons", "50422", "#26e59a"],
  ["Spinal cord", "5979", "#1ec8c4"], ["Thalamus", "79638", "#26a2de"], ["Unclassified", "130", "#417de0"],
  ["White matter", "4474", "#5e5ad0"],
];

const Category = ({ name, open }) => (
  <CategoryRow>
    <Box><Tick /></Box>
    <CategoryName>
      <Squeeze>{name}</Squeeze>
      <Chevron open={open} />
    </CategoryName>
    <DropButton $active={open}><Drop /></DropButton>
  </CategoryRow>
);

export default function App() {
  return (
    <Page>
      <GlobalStyle />
      <Header>
        <LogoBox><Logo /></LogoBox>
        <Nav>
          {navItems.map(([label, menu]) => (
            <NavItem key={label} $active={label === "Data Viewer"}>
              {label}
              {menu && <ThinChevron />}
            </NavItem>
          ))}
        </Nav>
      </Header>
      <Body>
        <Sidebar>
          <Category name="ethnicity" />
          <Category name="if_patient" />
          <CategoryRow $height={41.2}>
            <Squeeze><b>organ</b>: Brain</Squeeze>
          </CategoryRow>
          <Category name="original_name" />
          <Category name="original_name2" />
          <Category name="project_code" />
          <Category name="reference" />
          <Category name="region" open />
          <ValueList>
            {regions.map(([name, count, color]) => (
              <ValueRow key={name} $hover={name === "Hippocampus"}>
                <Box><Tick /></Box>
                <ValueName>{name}</ValueName>
                <Count>{count}</Count>
                <Swatch $color={color} />
              </ValueRow>
            ))}
          </ValueList>
          <Category name="sample_ID" />
        </Sidebar>
        <Canvas><Scatter /></Canvas>
        <GenePanel>
          <PanelTitle>
            <Squeeze $size={22.6} $weight={700} $track={-0.15}>Gene Sets</Squeeze>
            <Chevron open size={14} />
          </PanelTitle>
          <CreateButton><Squeeze>Create new</Squeeze></CreateButton>
        </GenePanel>
      </Body>
      <Tooltip><Squeeze>Hippocampus</Squeeze></Tooltip>
      <Annotation width="160" height="200" viewBox="360 280 160 200" fill="none" stroke="#ff2a0a" strokeWidth="2">
        <ellipse cx="427.700" cy="423.700" rx="52.700" ry="48" />
        <path d="M506.500 295.500 475 361" />
        <path d="M470 358 480.300 363.500 470.700 371.700Z" fill="#ff2a0a" stroke="none" />
      </Annotation>
    </Page>
  );
}
